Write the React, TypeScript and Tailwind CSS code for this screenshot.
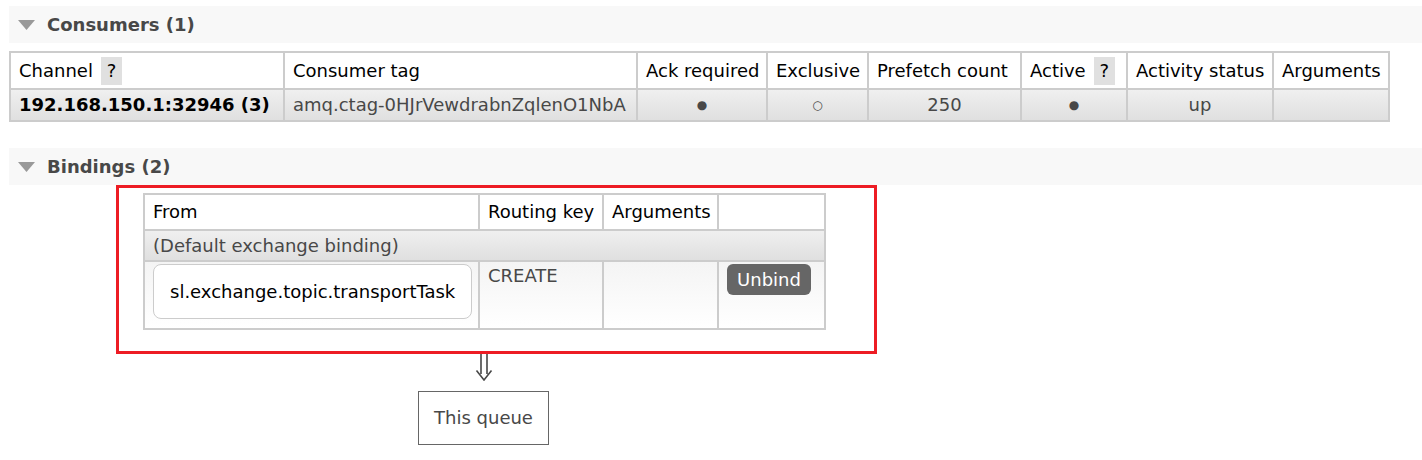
import React from 'react';

const font = { fontFamily: '"DejaVu Sans", Verdana, sans-serif' };

function SectionHeader({ title }: { title: string }) {
  return (
    <div className="ml-[9px] flex h-[37px] items-center bg-[#f8f8f8]">
      <svg className="ml-[9px] mr-[12px]" width="17" height="10" viewBox="0 0 17 10">
        <polygon points="0,0 17,0 8.5,10" fill="#999" />
      </svg>
      <h2 className="text-[18px] font-bold text-[#484848]">{title}</h2>
    </div>
  );
}

function Help() {
  return (
    <span className="ml-[8px] inline-block h-[28px] w-[21px] bg-[#e0e0e0] text-center leading-[28px]">?</span>
  );
}

const th = 'whitespace-nowrap border-2 border-[#ccc] px-[8px] text-left font-normal text-black';
const td = 'whitespace-nowrap border-2 border-[#ccc] px-[8px] text-[#484848]';

export default function App() {
  return (
    <div className="min-h-[460px] w-[1422px] bg-white pt-[6px] text-[18px] leading-[22px]" style={font}>
      <SectionHeader title="Consumers (1)" />

      <table className="ml-[9px] mt-[8px] w-[1379px] table-fixed border-collapse">
        <colgroup>
          <col className="w-[274px]" />
          <col className="w-[353px]" />
          <col className="w-[130px]" />
          <col className="w-[101px]" />
          <col className="w-[153px]" />
          <col className="w-[106px]" />
          <col className="w-[146px]" />
          <col className="w-[116px]" />
        </colgroup>
        <thead>
          <tr className="h-[37px]">
            <th className={th}>
              Channel
              <Help />
            </th>
            <th className={th}>Consumer tag</th>
            <th className={th}>Ack required</th>
            <th className={th}>Exclusive</th>
            <th className={th}>Prefetch count</th>
            <th className={th}>
              Active
              <Help />
            </th>
            <th className={th}>Activity status</th>
            <th className={th}>Arguments</th>
          </tr>
        </thead>
        <tbody>
          <tr className="h-[32px] bg-gradient-to-b from-[#f0f0f0] to-[#dfdfdf]">
            <td className={`${td} font-bold text-black`}>192.168.150.1:32946 (3)</td>
            <td className={td}>amq.ctag-0HJrVewdrabnZqlenO1NbA</td>
            <td className={`${td} text-center text-[12px]`}>●</td>
            <td className={`${td} text-center text-[12px]`}>○</td>
            <td className={`${td} text-center`}>250</td>
            <td className={`${td} text-center text-[12px]`}>●</td>
            <td className={`${td} text-center`}>up</td>
            <td className={td}></td>
          </tr>
        </tbody>
      </table>

      <div className="mt-[26px]">
        <SectionHeader title="Bindings (2)" />
      </div>

      <div className="ml-[116px] w-[761px] border-[3px] border-[#ed1c24] pb-[21px] pl-[24px] pt-[5px]">
        <table className="w-[681px] table-fixed border-collapse">
          <colgroup>
            <col className="w-[335px]" />
            <col className="w-[124px]" />
            <col className="w-[115px]" />
            <col className="w-[107px]" />
          </colgroup>
          <thead>
            <tr className="h-[36px]">
              <th className={th}>From</th>
              <th className={th}>Routing key</th>
              <th className={th}>Arguments</th>
              <th className={th}></th>
            </tr>
          </thead>
          <tbody>
            <tr className="h-[31px] bg-gradient-to-b from-[#f0f0f0] to-[#dfdfdf]">
              <td colSpan={4} className={td}>
                (Default exchange binding)
              </td>
            </tr>
            <tr className="h-[68px] bg-gradient-to-b from-[#f4f4f4] to-white">
              <td className={`${td} px-[6px] pb-[8px] pt-[2px] align-top`}>
                <div className="flex h-[55px] w-[319px] items-center rounded-[8px] border border-[#ccc] bg-white px-[16px] text-black">
                  sl.exchange.topic.transportTask
                </div>
              </td>
              <td className={`${td} pt-[3px] align-top`}>CREATE</td>
              <td className={td}></td>
              <td className={`${td} pt-[2px] align-top`}>
                <button className="h-[31px] w-[84px] rounded-[6px] bg-[#666] text-white">Unbind</button>
              </td>
            </tr>
          </tbody>
        </table>
      </div>

      <div className="ml-[143px] flex w-[681px] flex-col items-center">
        <svg width="18" height="27" viewBox="0 0 18 27" className="ml-[1px]">
          <path d="M6 0V20M12 0V20M1.5 16.5L9 26L16.5 16.5" fill="none" stroke="#484848" strokeWidth="1.6" />
        </svg>
        <div className="mt-[10px] flex h-[54px] w-[131px] items-center justify-center border border-[#666] text-[#484848]">
          This queue
        </div>
      </div>
    </div>
  );
}
